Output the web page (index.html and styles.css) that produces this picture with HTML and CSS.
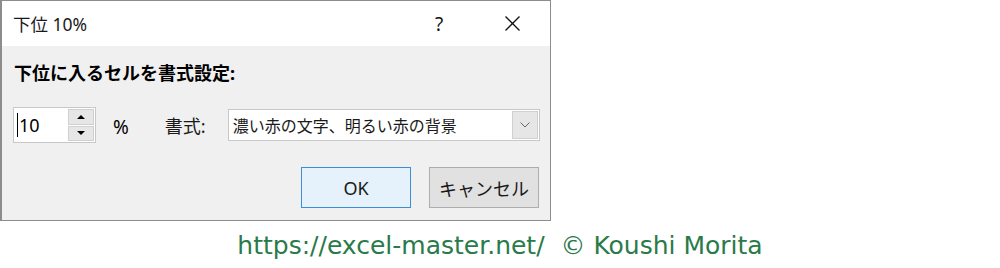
FILE: index.html
```html
<!DOCTYPE html>
<html lang="ja">
<head>
  <meta charset="UTF-8">
  <title>下位 10%</title>
  <link rel="stylesheet" href="styles.css">
</head>
<body>
  <div class="dialog">
    <div class="titlebar">
      <span class="title">下位 10%</span>
      <div class="title-btns">
        <span class="help">?</span>
        <span class="close">
          <svg width="15" height="15" viewBox="0 0 15 15">
            <path d="M0.5 0.5 L14.5 14.5 M14.5 0.5 L0.5 14.5" stroke="#111" stroke-width="1.3" fill="none"/>
          </svg>
        </span>
      </div>
    </div>

    <div class="content">
      <div class="heading">下位に入るセルを書式設定:</div>

      <div class="row">
        <div class="spin">
          <div class="spin-value">10</div>
          <div class="spin-btns">
            <div class="spin-btn"><span class="tri-up"></span></div>
            <div class="spin-btn"><span class="tri-down"></span></div>
          </div>
        </div>
        <span class="pct">%</span>
        <span class="label">書式:</span>
        <div class="combo">
          <span class="combo-text">濃い赤の文字、明るい赤の背景</span>
          <div class="combo-btn">
            <svg width="10" height="6" viewBox="0 0 10 6">
              <path d="M0.5 0.5 L5 5 L9.5 0.5" stroke="#666" stroke-width="1" fill="none"/>
            </svg>
          </div>
        </div>
      </div>

      <div class="buttons">
        <button class="btn btn-ok">OK</button>
        <button class="btn">キャンセル</button>
      </div>
    </div>
  </div>

  <div class="credit">https://excel-master.net/&nbsp; © Koushi Morita</div>
</body>
</html>
```

FILE: styles.css
```css
body {
  margin: 0;
  background: #fff;
  font-family: "Noto Sans", "Noto Sans CJK JP", sans-serif;
  color: #000;
}

.dialog {
  width: 548px;
  height: 219px;
  background: #f0f0f0;
  border: 1px solid #8c8c8c;
  border-left-width: 2px;
}

.titlebar {
  height: 45px;
  background: #fff;
  display: flex;
  align-items: center;
  padding-left: 11px;
}

.title {
  font-size: 17.5px;
  color: #1a1a1a;
}

.title-btns {
  margin-left: auto;
  display: flex;
  align-items: center;
}

.help {
  width: 46px;
  text-align: center;
  font-size: 19px;
  color: #111;
}

.close {
  width: 46px;
  margin-left: 27px;
  margin-right: 15px;
  display: flex;
  justify-content: center;
}

.content {
  padding: 0 0 0 11px;
}

.heading {
  font-size: 18px;
  font-weight: bold;
  margin-top: 14px;
  line-height: 26px;
  padding-left: 1px;
}

.row {
  display: flex;
  align-items: center;
  margin-top: 21px;
  height: 36px;
}

.spin {
  width: 81px;
  height: 34px;
  border: 1px solid #c8c8c8;
  background: #fff;
  display: flex;
}

.spin-value {
  flex: 1;
  font-size: 18px;
  padding-left: 1px;
  border-left: 1px solid #000;
  margin: 5px 0 5px 3px;
  line-height: 24px;
}

.spin-btns {
  width: 26px;
  display: flex;
  flex-direction: column;
  gap: 1px;
  padding: 1px;
}

.spin-btn {
  flex: 1;
  background: #e6e6e6;
  border: 1px solid #d0d0d0;
  display: flex;
  align-items: center;
  justify-content: center;
}

.tri-up {
  border-left: 4px solid transparent;
  border-right: 4px solid transparent;
  border-bottom: 4px solid #000;
}

.tri-down {
  border-left: 4px solid transparent;
  border-right: 4px solid transparent;
  border-top: 4px solid #000;
}

.pct {
  font-size: 19px;
  margin-left: 17px;
  margin-top: 4px;
}

.label {
  font-size: 18px;
  margin-left: 36px;
  color: #1a1a1a;
}

.combo {
  margin-left: 22px;
  width: 310px;
  height: 30px;
  border: 1px solid #c8c8c8;
  background: #fff;
  display: flex;
  align-items: center;
}

.combo-text {
  flex: 1;
  font-size: 16px;
  padding-left: 4px;
  color: #1a1a1a;
}

.combo-btn {
  width: 26px;
  height: 28px;
  margin-right: 1px;
  background: #e6e6e6;
  border: 1px solid #d0d0d0;
  box-sizing: border-box;
  display: flex;
  align-items: center;
  justify-content: center;
}

.buttons {
  display: flex;
  justify-content: flex-end;
  gap: 18px;
  margin-top: 24px;
  padding-right: 11px;
}

.btn {
  width: 110px;
  height: 41px;
  font-family: "Noto Sans", "Noto Sans CJK JP", sans-serif;
  font-size: 18px;
  color: #1a1a1a;
  background: #e1e1e1;
  border: 1px solid #adadad;
  padding: 0;
}

.btn-ok {
  background: #e5f1fb;
  border-color: #3b8fd9;
}

.credit {
  text-align: center;
  margin-top: 10px;
  font-family: "DejaVu Sans", sans-serif;
  font-size: 25px;
  color: #2a7a4a;
}
```
